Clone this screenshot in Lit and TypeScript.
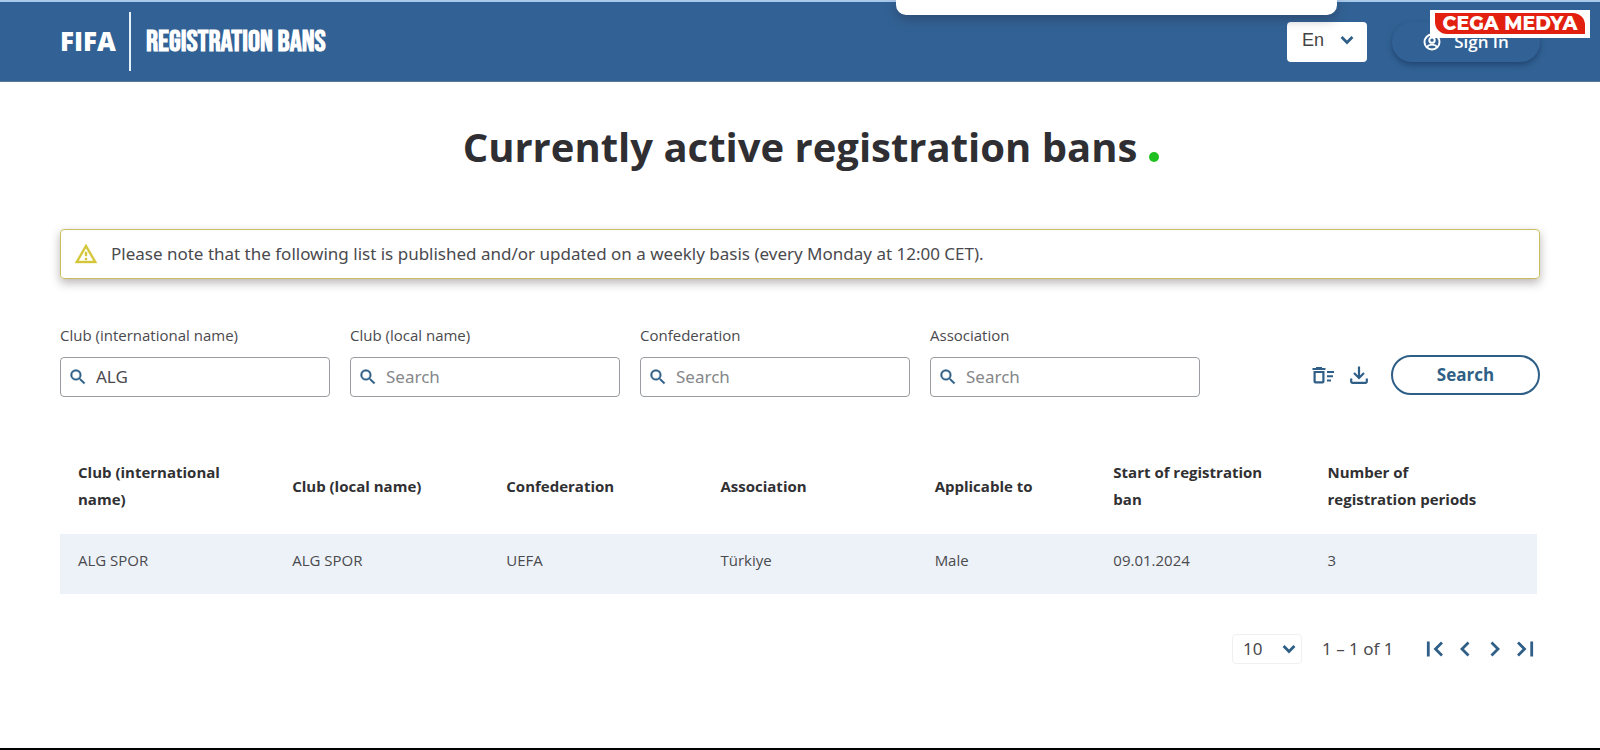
import { LitElement, html, css, svg } from "lit";
import { customElement, state } from "lit/decorators.js";

const icon = (body: unknown, size = 24) => html`
  <svg class="icon" width=${size} height=${size} viewBox="0 0 24 24" fill="currentColor" aria-hidden="true">${body}</svg>
`;

const glyphs = {
  search: svg`<path d="M15.5 14h-.79l-.28-.27A6.47 6.47 0 0 0 16 9.5 6.5 6.5 0 1 0 9.5 16c1.61 0 3.09-.59 4.23-1.57l.27.28v.79l5 4.99L20.49 19l-4.99-5zm-6 0A4.5 4.5 0 1 1 14 9.5 4.49 4.49 0 0 1 9.5 14z" stroke="currentColor" stroke-width=".4"/>`,
  warning: svg`<path d="M12 5.99 19.53 19H4.47L12 5.99M12 2 1 21h22L12 2zm1 14h-2v2h2v-2zm0-6h-2v4h2v-4z" stroke="currentColor" stroke-width=".4"/>`,
  clear: svg`<path d="M16 16.500h4v2h-4zm0-8.500h7v2h-7zm0 4.200h6v2h-6zM2.500 18.500c0 1.100.9 2 2 2h7c1.100 0 2-.9 2-2V8h-11v10.500zM4.700 10h6.600v8.300H4.700V10zM11 4H5v1H1.500v2h13V5H11z"/>`,
  download: svg`<path d="M12 3.500v11M7 10l5 5 5-5M4.200 15.500v2.700c0 1 .6 1.600 1.600 1.600h12.400c1 0 1.600-.6 1.600-1.600v-2.700" fill="none" stroke="currentColor" stroke-width="2.200"/>`,
  chevron: svg`<path d="m5.500 8.500 6.500 6.500 6.500-6.500" fill="none" stroke="currentColor" stroke-width="3.400"/>`,
  first: svg`<path d="M5.300 4.500v15M19 5.500 12.500 12l6.500 6.500" fill="none" stroke="currentColor" stroke-width="2.800"/>`,
  prev: svg`<path d="M15.500 5.500 9 12l6.500 6.500" fill="none" stroke="currentColor" stroke-width="2.800"/>`,
  next: svg`<path d="M8.500 5.500 15 12l-6.500 6.500" fill="none" stroke="currentColor" stroke-width="2.800"/>`,
  last: svg`<path d="M18.700 4.500v15M5 5.500l6.500 6.500L5 18.500" fill="none" stroke="currentColor" stroke-width="2.800"/>`,
  user: svg`<g fill="none" stroke="currentColor" stroke-width="2.600"><circle cx="12" cy="12" r="10"/><circle cx="12" cy="9.500" r="3.600"/><path d="M5 18.500c2-2.400 4-3 7-3s5 .6 7 3"/></g>`,
};

interface Column {
  title: string;
  key: string;
  width: string;
}

const columns: Column[] = [
  { title: "Club (international name)", key: "intl", width: "14.5%" },
  { title: "Club (local name)", key: "local", width: "14.5%" },
  { title: "Confederation", key: "confederation", width: "14.5%" },
  { title: "Association", key: "association", width: "14.5%" },
  { title: "Applicable to", key: "applicable", width: "12.1%" },
  { title: "Start of registration ban", key: "start", width: "14.5%" },
  { title: "Number of registration periods", key: "periods", width: "15.4%" },
];

const rows: Record<string, string>[] = [
  {
    intl: "ALG SPOR",
    local: "ALG SPOR",
    confederation: "UEFA",
    association: "Türkiye",
    applicable: "Male",
    start: "09.01.2024",
    periods: "3",
  },
];

@customElement("app-root")
export class AppRoot extends LitElement {
  @state() private filters = [
    { id: "club-intl", label: "Club (international name)", value: "ALG" },
    { id: "club-local", label: "Club (local name)", value: "" },
    { id: "confederation", label: "Confederation", value: "" },
    { id: "association", label: "Association", value: "" },
  ];

  static styles = css`
    :host {
      --blue: #326295;
      --ink-blue: #2f5f86;
      --wide-text: "Noto Sans", "Open Sans", sans-serif;
      display: flex;
      flex-direction: column;
      box-sizing: border-box;
      position: relative;
      min-height: 100vh;
      overflow-x: clip;
      border-bottom: 2px solid #000;
      background: #fff;
      color: #4a4a4e;
      font-family: "Open Sans", sans-serif;
      font-size: 16px;
      line-height: 24px;
    }
    * {
      box-sizing: border-box;
    }
    button,
    input,
    select {
      margin: 0;
      font: inherit;
      color: inherit;
    }
    button {
      cursor: pointer;
    }
    .icon {
      display: block;
      flex: none;
    }

    .header {
      display: flex;
      align-items: center;
      gap: 25px;
      padding: 10px 60px;
      border-top: 2px solid #a9c8ea;
      border-bottom: 1px solid #5c7797;
      background: var(--blue);
      color: #fff;
    }
    .brand {
      display: flex;
      align-items: center;
      margin-right: auto;
      color: inherit;
      text-decoration: none;
      white-space: nowrap;
    }
    .logo {
      padding-right: 13px;
      border-right: 2px solid #e6f0f8;
      font-size: 26px;
      font-weight: 800;
      line-height: 59px;
    }
    .product {
      padding-left: 15px;
      font-family: "Bebas Neue", "Liberation Sans", sans-serif;
      font-size: 30px;
      font-weight: 700;
      text-transform: uppercase;
    }
    .picker {
      display: grid;
      align-items: center;
    }
    .picker > * {
      grid-area: 1 / 1;
    }
    .picker .icon {
      justify-self: end;
      pointer-events: none;
      color: var(--ink-blue);
    }
    .picker select {
      appearance: none;
      width: 100%;
      background: #fff;
    }
    .language {
      width: 80px;
    }
    .language select {
      height: 40px;
      padding: 0 15px 4px;
      border: 0;
      border-radius: 4px;
      color: #444;
      font-family: "Liberation Sans", sans-serif;
      font-size: 18px;
    }
    .language .icon {
      margin: 0 10px 4px;
    }
    .sign-in {
      display: flex;
      align-items: center;
      justify-content: center;
      gap: 13px;
      width: 148px;
      height: 40px;
      border: 0;
      border-radius: 20px;
      background: var(--blue);
      box-shadow: 0 3px 6px rgba(10, 35, 70, 0.45);
      font-size: 17px;
      font-weight: 600;
    }

    .popup {
      position: absolute;
      top: 0;
      left: 56%;
      width: 441px;
      height: 15px;
      border-radius: 0 0 10px 10px;
      background: #fff;
      box-shadow: 0 4px 12px rgba(40, 40, 60, 0.4);
    }
    .watermark {
      position: absolute;
      top: 10px;
      right: 10px;
      padding: 3px 5px 4px;
      background: #fff;
    }
    .watermark span {
      display: block;
      width: 150px;
      border-radius: 0 12px 0 12px;
      background: #e2200f;
      color: #fff;
      font-family: Montserrat, Inter, sans-serif;
      font-size: 19px;
      font-weight: 800;
      line-height: 21px;
      text-align: center;
      white-space: nowrap;
    }

    .content {
      display: flex;
      flex-direction: column;
      padding: 35px 60px;
    }
    .heading {
      display: grid;
      grid-template-columns: 1fr auto 1fr;
      align-items: center;
      column-gap: 12px;
      margin-bottom: 52px;
    }
    .heading h1 {
      grid-column: 2;
      margin: 0;
      color: #2f2f33;
      font-size: 40px;
      font-weight: 700;
      line-height: 60px;
    }
    .dot {
      width: 10px;
      height: 10px;
      margin-top: 20px;
      border-radius: 50%;
      background: #1fc01f;
    }
    .notice {
      display: flex;
      align-items: center;
      gap: 13px;
      margin-bottom: 44px;
      padding: 12px 13px;
      border: 1px solid #c9bd62;
      border-radius: 4px;
      box-shadow: 0 4px 10px rgba(60, 50, 50, 0.35);
      font-family: var(--wide-text);
      font-size: 17px;
    }
    .notice .icon {
      color: #d3c638;
    }
    .notice p {
      margin: 0;
    }

    .filters {
      display: flex;
      align-items: flex-end;
      gap: 20px;
      margin-bottom: 54px;
    }
    .field {
      display: flex;
      flex: 0 1 270px;
      flex-direction: column;
      gap: 10px;
      min-width: 0;
      font-size: 15px;
    }
    .box {
      display: flex;
      align-items: center;
      gap: 8px;
      height: 40px;
      padding: 0 7px;
      border: 1px solid #999ca0;
      border-radius: 4px;
    }
    .box .icon {
      color: var(--ink-blue);
    }
    .box input {
      flex: 1;
      width: 100%;
      min-width: 0;
      padding: 0;
      border: 0;
      outline: 0;
      background: none;
      font-family: var(--wide-text);
      font-size: 17px;
    }
    .box input::placeholder {
      color: #85878a;
      opacity: 1;
    }
    .actions {
      display: flex;
      align-items: center;
      gap: 12px;
      margin-left: auto;
      padding-bottom: 2px;
      color: var(--ink-blue);
    }
    .plain {
      display: block;
      padding: 0;
      border: 0;
      background: none;
      color: var(--ink-blue);
    }
    .submit {
      width: 149px;
      height: 40px;
      margin-left: 8px;
      border: 2px solid var(--ink-blue);
      border-radius: 20px;
      background: none;
      font-size: 17px;
      font-weight: 700;
    }

    table {
      width: calc(100% - 3px);
      table-layout: fixed;
      border-collapse: collapse;
      font-size: 15px;
      line-height: 27px;
    }
    th,
    td {
      padding: 13px 18px 20px;
      text-align: left;
      overflow-wrap: break-word;
    }
    th {
      padding: 8px 44px 21px 18px;
      color: #303033;
      font-weight: 700;
    }
    th:not(:first-child):not(:nth-child(n + 6)) {
      padding-right: 0;
    }
    td {
      background: #edf2f8;
    }

    .pager {
      display: flex;
      align-items: center;
      justify-content: flex-end;
      gap: 20px;
      margin-top: 40px;
      padding-right: 3px;
      font-family: var(--wide-text);
      font-size: 17px;
    }
    .size {
      width: 70px;
    }
    .size select {
      height: 30px;
      padding: 0 10px;
      border: 1px solid #f0f0f2;
      border-radius: 4px;
    }
    .size .icon {
      margin-right: 3px;
    }
    .range {
      min-width: 77px;
    }
    .pages {
      display: flex;
      gap: 6px;
      padding-left: 4px;
    }
  `;

  private onInput(index: number, event: Event) {
    const value = (event.target as HTMLInputElement).value;
    this.filters = this.filters.map((f, i) => (i === index ? { ...f, value } : f));
  }

  private clearFilters() {
    this.filters = this.filters.map((f) => ({ ...f, value: "" }));
  }

  render() {
    return html`
      <header class="header">
        <a class="brand" href="#">
          <span class="logo">FIFA</span>
          <span class="product">Registration Bans</span>
        </a>
        <div class="picker language">
          <select aria-label="Language">
            <option>En</option>
          </select>
          ${icon(glyphs.chevron, 20)}
        </div>
        <button class="sign-in" type="button">${icon(glyphs.user, 18)}<span>Sign In</span></button>
      </header>

      <main class="content">
        <div class="heading">
          <h1>Currently active registration bans</h1>
          <span class="dot"></span>
        </div>

        <div class="notice" role="note">
          ${icon(glyphs.warning)}
          <p>Please note that the following list is published and/or updated on a weekly basis (every Monday at 12:00 CET).</p>
        </div>

        <form class="filters" @submit=${(e: Event) => e.preventDefault()}>
          ${this.filters.map(
            (f, i) => html`
              <div class="field">
                <label for=${f.id}>${f.label}</label>
                <div class="box">
                  ${icon(glyphs.search, 20)}
                  <input id=${f.id} type="text" placeholder="Search" .value=${f.value} @input=${(e: Event) => this.onInput(i, e)} />
                </div>
              </div>
            `
          )}
          <div class="actions">
            <button class="plain" type="button" aria-label="Clear filters" @click=${this.clearFilters}>${icon(glyphs.clear)}</button>
            <button class="plain" type="button" aria-label="Download">${icon(glyphs.download)}</button>
            <button class="submit" type="submit">Search</button>
          </div>
        </form>

        <table>
          <colgroup>
            ${columns.map((c) => html`<col style="width:${c.width}" />`)}
          </colgroup>
          <thead>
            <tr>
              ${columns.map((c) => html`<th scope="col">${c.title}</th>`)}
            </tr>
          </thead>
          <tbody>
            ${rows.map(
              (row) => html`<tr>
                ${columns.map((c) => html`<td>${row[c.key]}</td>`)}
              </tr>`
            )}
          </tbody>
        </table>

        <nav class="pager" aria-label="Pagination">
          <div class="picker size">
            <select aria-label="Rows per page">
              <option>10</option>
            </select>
            ${icon(glyphs.chevron, 20)}
          </div>
          <span class="range">1 – 1 of 1</span>
          <div class="pages">
            <button class="plain" type="button" aria-label="First page">${icon(glyphs.first)}</button>
            <button class="plain" type="button" aria-label="Previous page">${icon(glyphs.prev)}</button>
            <button class="plain" type="button" aria-label="Next page">${icon(glyphs.next)}</button>
            <button class="plain" type="button" aria-label="Last page">${icon(glyphs.last)}</button>
          </div>
        </nav>
      </main>

      <div class="popup"></div>
      <div class="watermark"><span>CEGA MEDYA</span></div>
    `;
  }
}
